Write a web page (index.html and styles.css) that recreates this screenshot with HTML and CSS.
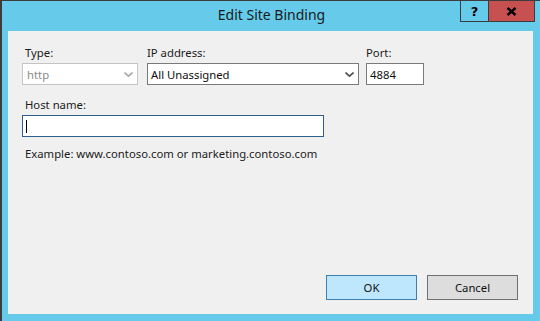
FILE: index.html
```html
<!DOCTYPE html>
<html lang="en">
<head>
    <meta charset="UTF-8">
    <title>Edit Site Binding</title>
    <link rel="stylesheet" href="styles.css">
</head>
<body>
    <div class="window">
        <div class="titlebar">
            <div class="title">Edit Site Binding</div>
            <div class="caption-buttons">
                <div class="cap-btn help">?</div>
                <div class="cap-btn close">
                    <svg width="11" height="9" viewBox="0 0 11 9">
                        <path d="M1.5 1 L9.5 8 M9.5 1 L1.5 8" stroke="#000" stroke-width="2.4" fill="none"/>
                    </svg>
                </div>
            </div>
        </div>

        <div class="client">
            <div class="form">
                <div class="row">
                    <div class="field type-field">
                        <div class="label">Type:</div>
                        <div class="combo disabled">
                            <span class="combo-text">http</span>
                            <svg class="chevron" width="9" height="5" viewBox="0 0 9 5">
                                <path d="M0.5 0.5 L4.5 4.2 L8.5 0.5" stroke="#a8a8a8" stroke-width="1.6" fill="none"/>
                            </svg>
                        </div>
                    </div>
                    <div class="field ip-field">
                        <div class="label">IP address:</div>
                        <div class="combo">
                            <span class="combo-text">All Unassigned</span>
                            <svg class="chevron" width="9" height="5" viewBox="0 0 9 5">
                                <path d="M0.5 0.5 L4.5 4.2 L8.5 0.5" stroke="#505050" stroke-width="1.6" fill="none"/>
                            </svg>
                        </div>
                    </div>
                    <div class="field port-field">
                        <div class="label">Port:</div>
                        <div class="textbox">4884</div>
                    </div>
                </div>

                <div class="field host-field">
                    <div class="label">Host name:</div>
                    <div class="textbox focused"><span class="caret"></span></div>
                    <div class="hint">Example: www.contoso.com or marketing.contoso.com</div>
                </div>
            </div>

            <div class="buttons">
                <div class="btn default">OK</div>
                <div class="btn">Cancel</div>
            </div>
        </div>
    </div>
</body>
</html>
```

FILE: styles.css
```css
body {
    margin: 0;
    width: 540px;
    height: 321px;
    overflow: hidden;
    font-family: "Noto Sans", "Open Sans", sans-serif;
    font-size: 11.3px;
    color: #1b1b1b;
}

.window {
    height: 320px;
    background-color: #66cbea;
    border-top: 1px solid #3c3c3c;
    border-left: 2px solid #3c3c3c;
    display: flex;
    flex-direction: column;
}

.titlebar {
    height: 30px;
    position: relative;
    display: flex;
    justify-content: center;
}

.title {
    font-size: 14px;
    line-height: 14px;
    padding-top: 7px;
    padding-left: 1px;
    color: #1a1a1a;
}

.caption-buttons {
    position: absolute;
    top: -1px;
    left: 458px;
    display: flex;
}

.cap-btn {
    height: 20px;
    border: 1px solid #3c3c3c;
    display: flex;
    align-items: center;
    justify-content: center;
    font-family: "DejaVu Sans", sans-serif;
    font-weight: bold;
    font-size: 13px;
    color: #000;
}

.cap-btn.help {
    width: 27px;
    border-right: none;
}

.cap-btn.close {
    width: 45px;
    background-color: #c75050;
}

.client {
    margin-left: 6px;
    margin-right: 7px;
    height: 283px;
    background-color: #f0f0f0;
    box-sizing: border-box;
    padding: 16px 15px 14px 14px;
    display: flex;
    flex-direction: column;
    justify-content: space-between;
}

.row {
    display: flex;
}

.label {
    height: 16px;
    line-height: 12px;
    padding-left: 3px;
}

.ip-field .label,
.port-field .label {
    padding-left: 0;
}

.type-field {
    width: 116px;
    margin-right: 9px;
}

.ip-field {
    width: 212px;
    margin-right: 7px;
}

.port-field {
    width: 58px;
}

.combo,
.textbox {
    height: 22px;
    box-sizing: border-box;
    background-color: #fff;
    border: 1px solid #7a7a7a;
    display: flex;
    align-items: center;
    padding: 0 3px 0 3px;
    color: #111;
}

.combo {
    justify-content: space-between;
    padding-right: 4px;
}

.combo.disabled {
    border-color: #c4c4c4;
    color: #8a8a8a;
    padding-left: 4px;
}

.chevron {
    margin-top: 1px;
}

.host-field {
    margin-top: 14px;
}

.host-field .textbox {
    width: 302px;
    border-color: #2e5e8c;
}

.caret {
    width: 1px;
    height: 13px;
    background-color: #000;
}

.hint {
    margin-top: 9px;
    padding-left: 3px;
}

.buttons {
    display: flex;
    justify-content: flex-end;
    gap: 10px;
}

.btn {
    width: 91px;
    height: 25px;
    box-sizing: border-box;
    border: 1px solid #707070;
    background-color: #dddddd;
    display: flex;
    align-items: center;
    justify-content: center;
    color: #111;
}

.btn.default {
    border-color: #3c7fb1;
    background-color: #bee6fd;
}
```
